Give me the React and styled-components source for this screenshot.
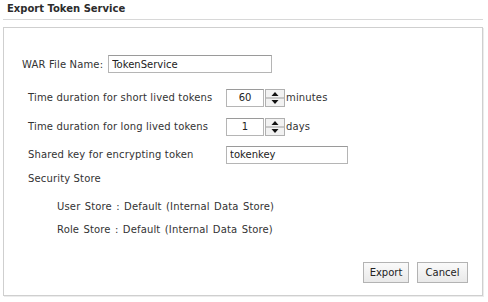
import styled, { createGlobalStyle } from "styled-components";

const GlobalStyle = createGlobalStyle`
  html, body { margin: 0; padding: 0; background: #fff; }
  body {
    font-family: "DejaVu Sans", Verdana, sans-serif;
    font-size: 10px;
    letter-spacing: 0.15px;
    color: #333;
  }
`;

const Page = styled.div`
  width: 488px;
  height: 302px;
  box-sizing: border-box;
  padding: 2px 5px 0 3px;
`;

const Title = styled.h2`
  margin: 0;
  padding: 0 0 4px 4px;
  font-size: 10px;
  font-weight: bold;
  letter-spacing: 0;
  color: #2c2c2c;
  line-height: 13px;
  border-bottom: 1px solid #d8d8d8;
`;

const Panel = styled.div`
  margin-top: 7px;
  height: 269px;
  box-sizing: border-box;
  border: 1px solid #cfcfcf;
  box-shadow: 1px 1px 0 #ececec;
  padding: 27px 14px 0 18px;
  display: flex;
  flex-direction: column;
`;

const FieldRow = styled.div`
  display: flex;
  align-items: center;
  height: 18px;
  gap: 5px;
`;

const Table = styled.div`
  margin-top: 10px;
  padding-left: 6px;
  display: flex;
  flex-direction: column;
`;

const Row = styled.div`
  display: grid;
  grid-template-columns: 198px auto;
  align-items: center;
  height: ${(p) => p.$h}px;
  white-space: nowrap;
`;

const TextRow = styled.div`
  display: flex;
  align-items: center;
  height: 18px;
  margin-top: ${(p) => p.$mt}px;
  padding-left: ${(p) => p.$indent || 0}px;
  word-spacing: ${(p) => (p.$indent ? "1px" : "0")};
  white-space: nowrap;
`;

const TextBox = styled.input`
  box-sizing: border-box;
  height: 18px;
  width: ${(p) => p.$w}px;
  border: 1px solid #b5b5b5;
  border-top-color: #9a9a9a;
  padding: 0 3px;
  font: inherit;
  color: #222;
  text-align: ${(p) => (p.$center ? "center" : "left")};
  outline: none;
  background: #fff;
`;

const Spin = styled.div`
  display: flex;
  align-items: center;
`;

const SpinButtons = styled.span`
  display: inline-flex;
  width: 20px;
  height: 18px;
  margin-left: 1px;
  margin-right: 1px;
`;

const Unit = styled.span`
  color: #333;
`;

const Footer = styled.div`
  margin-top: auto;
  margin-bottom: 12px;
  display: flex;
  justify-content: flex-end;
  gap: 8px;
`;

const Button = styled.button`
  box-sizing: border-box;
  height: 21px;
  width: ${(p) => p.$w}px;
  border: 1px solid #b3b3b3;
  background: linear-gradient(#fafafa, #e9e9e9);
  font: inherit;
  font-size: 10px;
  color: #222;
  padding: 0;
`;

function Spinner() {
  return (
    <SpinButtons>
      <svg width="20" height="18" viewBox="0 0 20 18">
        <rect x="0.5" y="0.5" width="19" height="17" fill="#f2f2f2" stroke="#b0b0b0" />
        <line x1="1" y1="9" x2="19" y2="9" stroke="#9c9c9c" />
        <polygon points="6.5,7 10,3 13.5,7" fill="#111" />
        <polygon points="6.5,11 13.5,11 10,15" fill="#111" />
      </svg>
    </SpinButtons>
  );
}

export default function App() {
  return (
    <Page>
      <GlobalStyle />
      <Title>Export Token Service</Title>
      <Panel>
        <FieldRow>
          <span>WAR File Name:</span>
          <TextBox $w={164} defaultValue="TokenService" />
        </FieldRow>
        <Table>
          <Row $h={29}>
            <span>Time duration for short lived tokens</span>
            <Spin>
              <TextBox $w={38} $center defaultValue="60" />
              <Spinner />
              <Unit>minutes</Unit>
            </Spin>
          </Row>
          <Row $h={29}>
            <span>Time duration for long lived tokens</span>
            <Spin>
              <TextBox $w={38} $center defaultValue="1" />
              <Spinner />
              <Unit>days</Unit>
            </Spin>
          </Row>
          <Row $h={27}>
            <span>Shared key for encrypting token</span>
            <TextBox $w={122} defaultValue="tokenkey" />
          </Row>
          <TextRow $mt={1}>Security Store</TextRow>
          <TextRow $mt={10} $indent={29}>
            User Store : Default (Internal Data Store)
          </TextRow>
          <TextRow $mt={5} $indent={29}>
            Role Store : Default (Internal Data Store)
          </TextRow>
        </Table>
        <Footer>
          <Button $w={46}>Export</Button>
          <Button $w={51}>Cancel</Button>
        </Footer>
      </Panel>
    </Page>
  );
}
